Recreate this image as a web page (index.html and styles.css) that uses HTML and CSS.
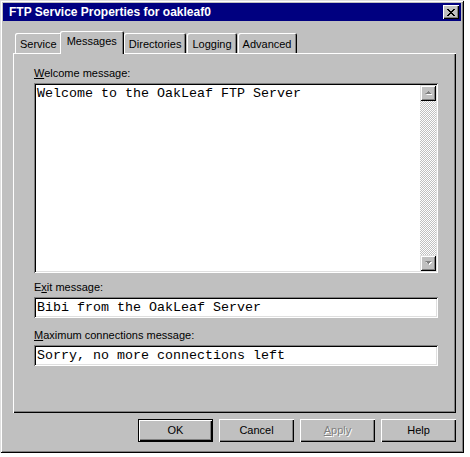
FILE: index.html
```html
<!DOCTYPE html>
<html lang="en">
<head>
    <meta charset="UTF-8">
    <meta name="viewport" content="width=device-width, initial-scale=1.0">
    <title>FTP Service Properties for oakleaf0</title>
    <link rel="stylesheet" href="styles.css">
</head>
<body>
    <div class="window">
        <div class="titlebar">
            <span class="title">FTP Service Properties for oakleaf0</span>
            <span class="close-btn">
                <svg width="8" height="7" viewBox="0 0 8 7">
                    <path d="M0 0h2v1h1v1h2v-1h1v-1h2v1h-1v1h-1v1h-1v1h1v1h1v1h1v1h-2v-1h-1v-1h-2v1h-1v1h-2v-1h1v-1h1v-1h1v-1h-1v-1h-1v-1h-1z" fill="#000"/>
                </svg>
            </span>
        </div>

        <div class="tabs">
            <div class="tab">Service</div>
            <div class="tab tab-active">Messages</div>
            <div class="tab">Directories</div>
            <div class="tab">Logging</div>
            <div class="tab">Advanced</div>
        </div>

        <div class="panel">
            <div class="label"><u>W</u>elcome message:</div>
            <div class="memo">
                <div class="memo-text">Welcome to the OakLeaf FTP Server</div>
                <div class="scrollbar">
                    <div class="scroll-btn">
                        <svg width="7" height="4" viewBox="0 0 7 4">
                            <path d="M1 4h6v-1h-1v-1h-1v-1h-1v1h-1v1h-1z" fill="#fff"/>
                            <path d="M0 3h6v-1h-1v-1h-1v-1h-1v1h-1v1h-1z" fill="#808080"/>
                        </svg>
                    </div>
                    <div class="scroll-track"></div>
                    <div class="scroll-btn">
                        <svg width="7" height="4" viewBox="0 0 7 4">
                            <path d="M1 1h6v1h-1v1h-1v1h-1v-1h-1v-1h-1z" fill="#fff"/>
                            <path d="M0 0h6v1h-1v1h-1v1h-1v-1h-1v-1h-1z" fill="#808080"/>
                        </svg>
                    </div>
                </div>
            </div>

            <div class="label label-gap">E<u>x</u>it message:</div>
            <div class="field">Bibi from the OakLeaf Server</div>

            <div class="label label-gap-lg"><u>M</u>aximum connections message:</div>
            <div class="field">Sorry, no more connections left</div>
        </div>

        <div class="buttons">
            <div class="btn btn-default">OK</div>
            <div class="btn">Cancel</div>
            <div class="btn btn-disabled"><u>A</u>pply</div>
            <div class="btn">Help</div>
        </div>
    </div>
</body>
</html>
```

FILE: styles.css
```css
* {
    box-sizing: border-box;
}

body {
    margin: 0;
    background-color: #ffffff;
    font-family: 'Liberation Sans', Arial, sans-serif;
    font-size: 11px;
    color: #000000;
}

/* window frame */

.window {
    width: 464px;
    height: 453px;
    padding: 3px;
    background-color: #c0c0c0;
    box-shadow: inset 1px 1px #dfdfdf, inset -1px -1px #000000,
                inset 2px 2px #ffffff, inset -2px -2px #808080;
}

.titlebar {
    height: 18px;
    background-color: #000080;
    color: #ffffff;
    display: flex;
    align-items: center;
    justify-content: space-between;
    padding: 0 2px 0 6px;
}

.title {
    font-weight: bold;
    font-size: 12px;
}

.close-btn {
    width: 16px;
    height: 14px;
    background-color: #c0c0c0;
    display: flex;
    align-items: center;
    justify-content: center;
    box-shadow: inset 1px 1px #ffffff, inset -1px -1px #000000,
                inset -2px -2px #808080;
}

/* tabs */

.tabs {
    display: flex;
    align-items: flex-end;
    height: 32px;
    padding-left: 12px;
}

.tab {
    height: 20px;
    padding: 4px 5px 0 5px;
    margin-right: 1px;
    line-height: 15px;
    border-top-left-radius: 2px;
    border-top-right-radius: 2px;
    box-shadow: inset 1px 1px #ffffff, inset -1px 0 #000000,
                inset -2px 0 #808080;
}

.tab-active {
    height: 23px;
    padding: 3px 7px 0 7px;
    margin: 0 -1px -1px -3px;
    position: relative;
    z-index: 1;
    background-color: #c0c0c0;
}

.tab-active + .tab {
    margin-left: 1px;
}

/* tab panel */

.panel {
    width: 443px;
    height: 360px;
    margin-left: 10px;
    padding: 14px 0 0 21px;
    box-shadow: inset 1px 1px #ffffff, inset -1px -1px #000000,
                inset -2px -2px #808080;
}

.label {
    height: 13px;
    line-height: 13px;
    margin-bottom: 3px;
}

.label-gap {
    margin-top: 8px;
}

.label-gap-lg {
    margin-top: 11px;
}

.memo, .field {
    width: 404px;
    background-color: #ffffff;
    font-family: 'Liberation Mono', 'Courier New', monospace;
    font-size: 13.33px;
    box-shadow: inset 1px 1px #808080, inset -1px -1px #ffffff,
                inset 2px 2px #000000, inset -2px -2px #dfdfdf;
}

.memo {
    height: 190px;
    padding: 2px;
    display: flex;
}

.memo-text {
    flex: 1;
    padding: 1px 0 0 1px;
    line-height: 15px;
    white-space: pre;
}

.field {
    height: 21px;
    line-height: 17px;
    padding: 2px 3px;
    white-space: pre;
}

/* scrollbar */

.scrollbar {
    width: 16px;
    display: flex;
    flex-direction: column;
}

.scroll-btn {
    height: 16px;
    background-color: #c0c0c0;
    display: flex;
    align-items: center;
    justify-content: center;
    box-shadow: inset 1px 1px #dfdfdf, inset -1px -1px #000000,
                inset 2px 2px #ffffff, inset -2px -2px #808080;
}

.scroll-track {
    flex: 1;
    background-image: repeating-conic-gradient(#ffffff 0 25%, #c0c0c0 0 50%);
    background-size: 2px 2px;
}

/* buttons */

.buttons {
    display: flex;
    justify-content: flex-end;
    gap: 6px;
    margin-top: 6px;
    padding-right: 5px;
}

.btn {
    width: 75px;
    height: 23px;
    line-height: 23px;
    text-align: center;
    box-shadow: inset 1px 1px #ffffff, inset -1px -1px #000000,
                inset -2px -2px #808080;
}

.btn-default {
    box-shadow: inset 0 0 0 1px #000000, inset 2px 2px #ffffff,
                inset -2px -2px #000000, inset -3px -3px #808080;
}

.btn-disabled {
    color: #808080;
    text-shadow: 1px 1px #ffffff;
}
```
